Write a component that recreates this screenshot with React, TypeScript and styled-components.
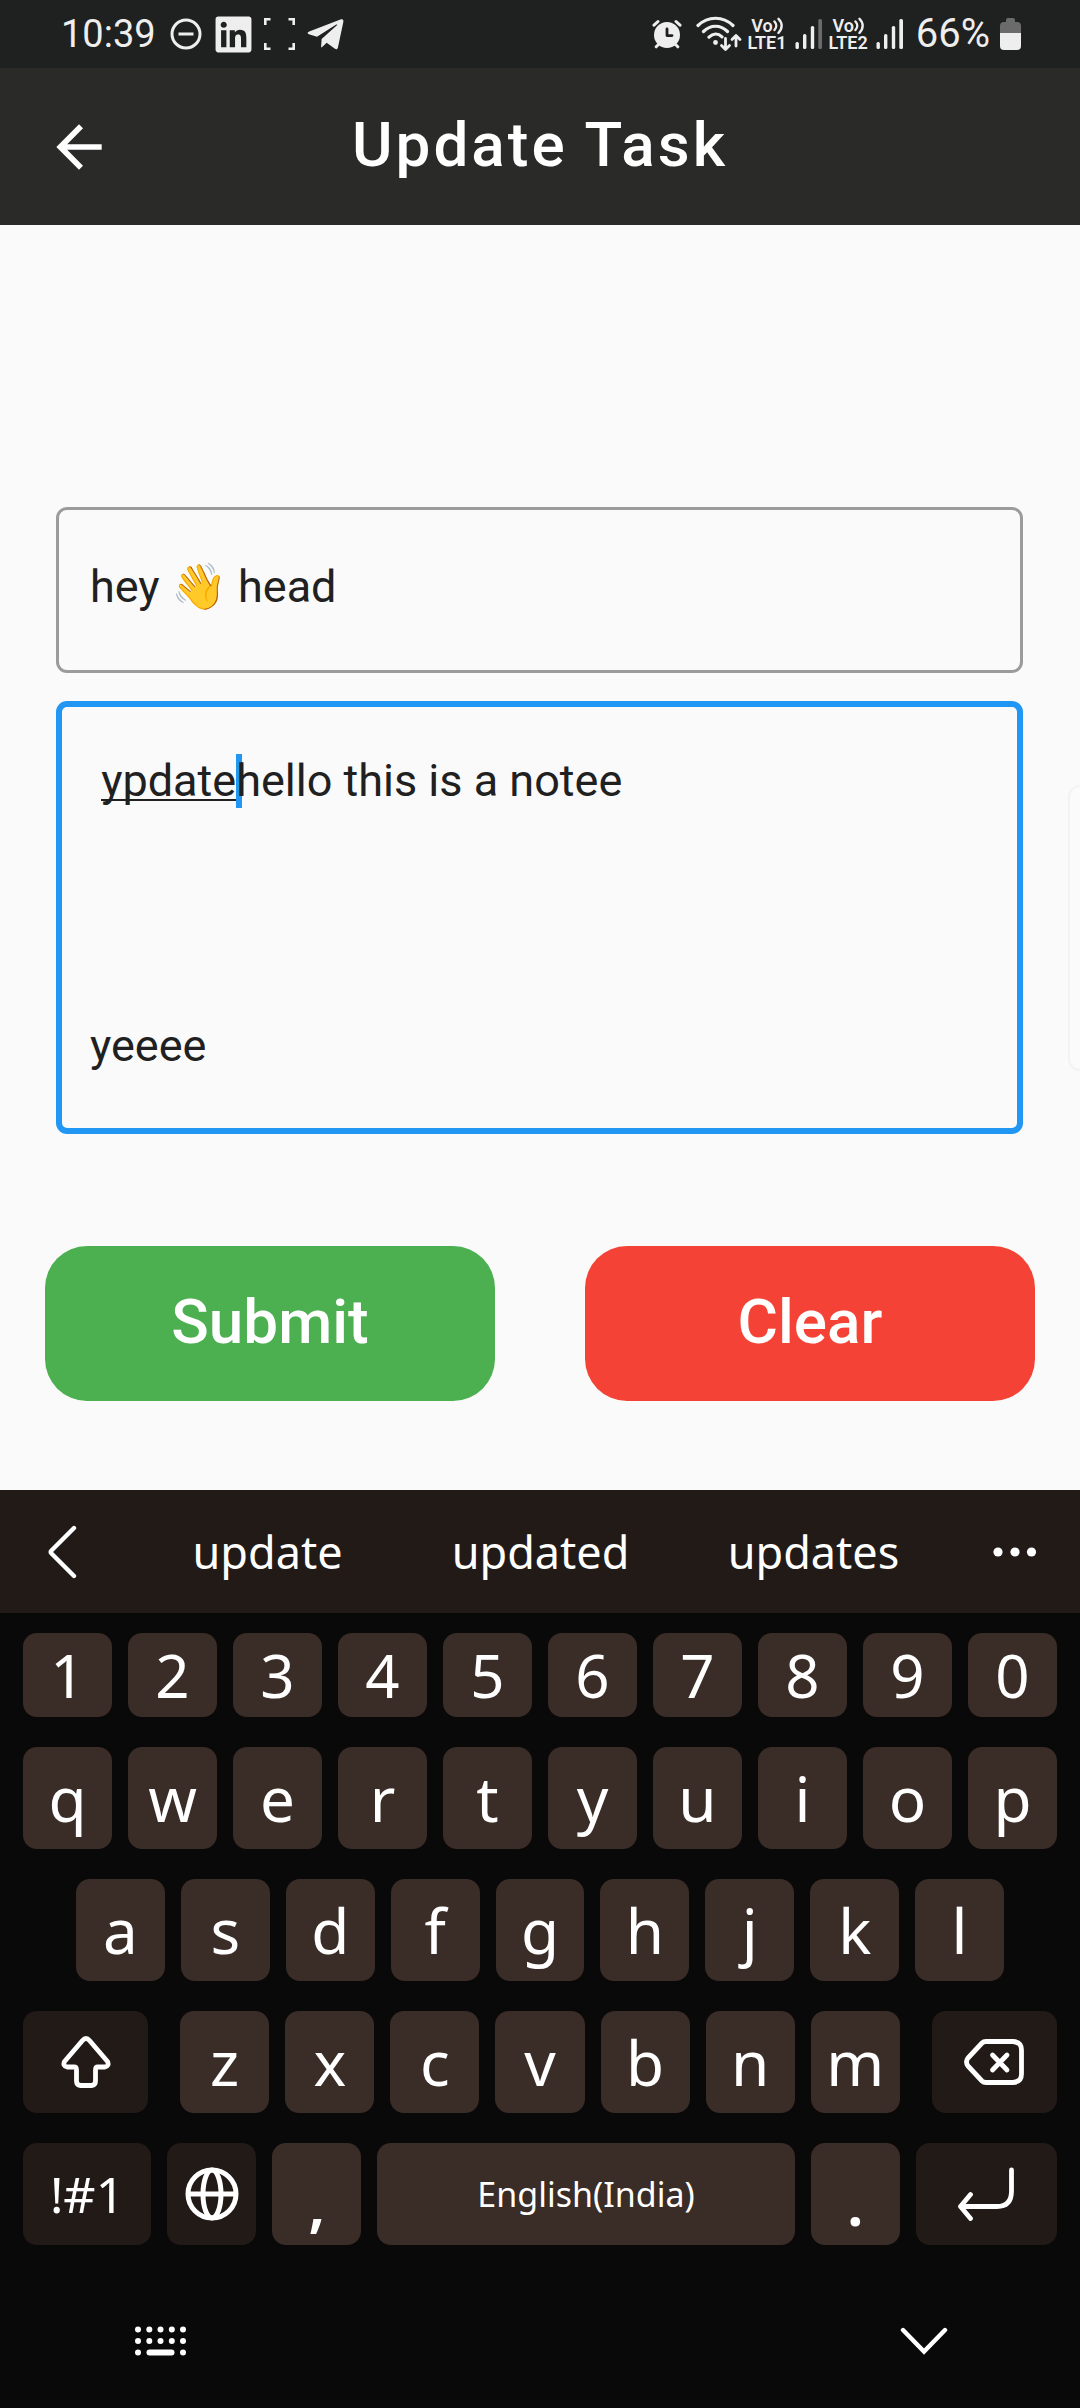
import React, { useLayoutEffect, useState } from 'react';
import styled, { createGlobalStyle, css } from 'styled-components';
import { FaLinkedin, FaTelegramPlane } from 'react-icons/fa';
import { MdArrowBack } from 'react-icons/md';

const GlobalStyle = createGlobalStyle`
  *, *::before, *::after { box-sizing: border-box; }
  body { margin: 0; background: #fafafa; }
  button, input, textarea { font-family: inherit; }
`;

const appFont = "Roboto, 'Noto Sans', sans-serif";
const keyFont = "'Noto Sans', Roboto, sans-serif";
const fieldText = '45px';
const headingText = '62px';

const Screen = styled.div`
  position: relative;
  display: flex;
  flex-direction: column;
  min-height: 100vh;
  overflow: hidden;
  background: #fafafa;
  font-family: ${appFont};
`;

/* ---------- status bar ---------- */

const StatusBar = styled.div`
  display: flex;
  justify-content: space-between;
  align-items: center;
  height: 68px;
  padding: 0 59px 0 61px;
  background: #1f2020;
  color: #eeeeee;
`;

const StatusGroup = styled.div<{ $gap: number }>`
  display: flex;
  align-items: center;
  gap: ${(p) => p.$gap}px;

  svg {
    display: block;
    flex: none;
  }
`;

const StatusText = styled.span`
  font-size: 38px;
  line-height: 44px;
`;

const BatteryText = styled(StatusText)`
  padding: 0 5px 0 6px;
  font-size: 40px;
`;

const Lte = styled.span`
  display: flex;
  flex-direction: column;
  align-items: center;
  font-size: 18px;
  font-weight: 600;
  line-height: 17px;
`;

const LteTop = styled.span`
  display: flex;
  align-items: center;
`;

/* ---------- app bar ---------- */

const AppBar = styled.header`
  display: grid;
  grid-template-columns: 1fr auto 1fr;
  align-items: center;
  height: 157px;
  padding: 0 45px;
  background: #2a2b29;
  color: #ffffff;
`;

const IconButton = styled.button`
  display: flex;
  align-items: center;
  justify-content: center;
  justify-self: start;
  padding: 0;
  border: 0;
  background: none;
  color: inherit;
`;

const Title = styled.h1`
  margin: 0;
  padding-bottom: 4px;
  font-size: ${headingText};
  font-weight: 500;
  line-height: 72px;
  letter-spacing: 3px;
`;

/* ---------- form ---------- */

const Form = styled.form`
  display: flex;
  flex: 1;
  flex-direction: column;
  padding: 282px 0 89px;
`;

const Fields = styled.div`
  display: flex;
  flex-direction: column;
  gap: 28px;
  padding: 0 57px 0 56px;
`;

const fieldBase = css`
  display: block;
  width: 100%;
  margin: 0;
  border-style: solid;
  border-radius: 11px;
  outline: none;
  background: transparent;
  color: #202020;
  font-size: ${fieldText};
  line-height: 53px;
`;

const TitleInput = styled.input`
  ${fieldBase}
  height: 166px;
  padding: 0 31px 8px;
  border-width: 3px;
  border-color: #9b9b9b;
`;

const NoteBox = styled.div`
  position: relative;
`;

const NoteInput = styled.textarea`
  ${fieldBase}
  position: relative;
  padding: 47px 28px 56px;
  border-width: 6px;
  border-color: #2196f3;
  resize: none;
  overflow: hidden;
`;

const Caret = styled.span`
  position: absolute;
  top: 53px;
  width: 6px;
  height: 54px;
  background: #2196f3;
`;

const ComposingLine = styled.span`
  position: absolute;
  top: 98px;
  height: 2px;
  background: #202020;
`;

const Actions = styled.div`
  display: grid;
  grid-template-columns: 1fr 1fr;
  gap: 90px;
  margin-top: 112px;
  padding: 0 45px;
`;

const ActionButton = styled.button<{ $color: string }>`
  height: 155px;
  padding: 0 0 3px;
  border: 0;
  border-radius: 42px;
  background: ${(p) => p.$color};
  color: #ffffff;
  font-size: ${headingText};
  font-weight: 500;
  line-height: 72px;
`;

const EdgeHandle = styled.div`
  position: absolute;
  top: 785px;
  right: 0;
  width: 12px;
  height: 286px;
  border: 2px solid #f3f3f3;
  border-right: 0;
  border-radius: 16px 0 0 16px;
  background: #fbfbfb;
`;

/* ---------- keyboard ---------- */

const Keyboard = styled.section`
  background: #090909;
  color: #ffffff;
  font-family: ${keyFont};

  svg {
    display: block;
  }
`;

const Suggestions = styled.div`
  display: grid;
  grid-template-columns: 131px 1fr 1fr 1fr 130px;
  align-items: center;
  height: 123px;
  background: #221a17;
`;

const Suggestion = styled.button`
  display: flex;
  align-items: center;
  justify-content: center;
  height: 100%;
  padding: 0;
  border: 0;
  background: none;
  color: inherit;
  font-size: 45px;
  line-height: 60px;
`;

const Rows = styled.div`
  display: flex;
  flex-direction: column;
  gap: 30px;
  padding: 20px 23px 0;
`;

const Row = styled.div<{ $inset?: boolean }>`
  display: flex;
  gap: 16px;
  padding: 0 ${(p) => (p.$inset ? 53 : 0)}px;
`;

const KeyGroup = styled.div`
  display: flex;
  flex: 719 1 0;
  gap: 16px;
  margin: 0 16px;
`;

type KeyProps = {
  $span?: number;
  $short?: boolean;
  $dark?: boolean;
  $size?: number;
  $low?: boolean;
};

const Key = styled.button<KeyProps>`
  display: flex;
  flex: ${(p) => p.$span ?? 89} 1 0;
  align-items: center;
  justify-content: center;
  min-width: 0;
  height: ${(p) => (p.$short ? 84 : 102)}px;
  padding: ${(p) => (p.$low ? 16 : 0)}px 0 0;
  border: 0;
  border-radius: 14px;
  background: ${(p) => (p.$dark ? '#221a17' : '#3a2c26')};
  color: inherit;
  font-size: ${(p) => p.$size ?? 62}px;
  font-weight: ${(p) => (p.$low ? 600 : 400)};
  line-height: 84px;
`;

const NavBar = styled.nav`
  display: flex;
  align-items: center;
  justify-content: space-between;
  height: 164px;
  padding: 28px 132px 0 134px;
`;

/* ---------- drawings ---------- */

const DndIcon = () => (
  <svg width="37" height="32" viewBox="-4 0 37 32" fill="none" stroke="currentColor" strokeWidth="3">
    <circle cx="16" cy="16" r="14" />
    <path d="M8.5 16h15" />
  </svg>
);

const FrameIcon = () => (
  <svg width="31" height="32" viewBox="0 0 31 32" fill="none" stroke="currentColor" strokeWidth="2.6">
    <path d="M1.3 7V1.3H6.5M24.5 1.3h5.2V7M29.7 25v5.7h-5.2M6.5 30.7H1.3V25" />
  </svg>
);

const AlarmIcon = () => (
  <svg width="39" height="30" viewBox="0 0 39 30" fill="none" stroke="currentColor" strokeLinecap="round">
    <circle cx="15" cy="16" r="13" fill="currentColor" stroke="none" />
    <path strokeWidth="3" d="M2 6.2 6 2.5M28 6.2 24 2.5M4.2 27.8 7 25M25.8 27.8 23 25" />
    <path stroke="#1f2020" strokeWidth="2.8" strokeLinejoin="round" d="M15 10v6.6h5" />
  </svg>
);

const WifiIcon = () => (
  <svg width="46" height="36" viewBox="0 0 46 36" fill="none" stroke="currentColor" strokeWidth="3.2" strokeLinecap="round">
    <path d="M2 9.5C12-.2 27-.2 37 9.5M7.5 15.5c7-7 17-7 24 0M13 21.2c4-4 9-4.2 13-.4" />
    <circle cx="19.5" cy="26.5" r="2.4" fill="currentColor" stroke="none" />
    <path strokeWidth="2.8" strokeLinejoin="round" d="M29.5 22.5V33M25.5 29.5l4 4 4-4M40 30V20M36 23.5l4-4 4 4" />
  </svg>
);

const VoiceWaves = () => (
  <svg width="10" height="17" viewBox="0 0 10 17" fill="none" stroke="currentColor" strokeWidth="2.4" strokeLinecap="round">
    <path d="M1.5 4.5c2.3 2.5 2.3 6 0 8.5M5.5 1.8c4.2 4 4.2 10 0 14" />
  </svg>
);

const SignalIcon = ({ weak }: { weak?: boolean }) => (
  <svg width="32" height="32" viewBox="-3 0 32 32" fill="currentColor">
    <rect x="0.5" y="24" width="3.4" height="7" rx="1.5" />
    <rect x="8" y="16" width="3.4" height="15" rx="1.5" />
    <rect x="15.8" y="8" width="3.4" height="23" rx="1.5" />
    <rect x="23.3" y="1" width="3.7" height="30" rx="1.5" fill={weak ? '#6b6b6b' : 'currentColor'} />
  </svg>
);

const BatteryIcon = () => (
  <svg width="21" height="32" viewBox="0 0 21 32">
    <path fill="#6b6b6b" d="M6 4V2q0-2 2-2h5q2 0 2 2v2h2q4 0 4 4v7H0V8q0-4 4-4z" />
    <path fill="currentColor" d="M0 15h21v13q0 4-4 4H4q-4 0-4-4z" />
  </svg>
);

const ChevronLeft = () => (
  <svg width="38" height="54" viewBox="0 0 38 54" fill="none" stroke="currentColor" strokeWidth="4.4" strokeLinecap="round" strokeLinejoin="round">
    <path d="M27 3 4.5 25.5q-1.5 1.5 0 3L27 51" />
  </svg>
);

const MoreDots = () => (
  <svg width="44" height="10" viewBox="0 0 44 10" fill="currentColor">
    <circle cx="5" cy="5" r="4.6" />
    <circle cx="22" cy="5" r="4.6" />
    <circle cx="38.5" cy="5" r="4.6" />
  </svg>
);

const ShiftIcon = () => (
  <svg width="50" height="52" viewBox="0 0 50 52" fill="none" stroke="currentColor" strokeWidth="4.8" strokeLinejoin="round">
    <path d="M21.5 4.5q3.5-4 7 0L46.5 25.5q2 4.5-2.5 5.5h-7q-2.5 0-2.5 3v11q0 4-4 4.5h-11q-4-.5-4-4.5V34q0-3-2.5-3H6q-4.5-1-2.5-5.5z" />
  </svg>
);

const BackspaceIcon = () => (
  <svg width="60" height="46" viewBox="0 0 60 46" fill="none" stroke="currentColor" strokeWidth="4.8" strokeLinecap="round" strokeLinejoin="round">
    <path d="M22 2.5h27q8.5.5 8.5 8.5v24q0 8-8.5 8.5H22q-2.5 0-4-1.5L4 27q-3-4 0-8L18 4q1.5-1.5 4-1.5z" />
    <path d="M28.5 16 43 31M43 16 28.5 31" />
  </svg>
);

const GlobeIcon = () => (
  <svg width="54" height="54" viewBox="0 0 54 54" fill="none" stroke="currentColor" strokeWidth="5">
    <circle cx="27" cy="27" r="24" />
    <ellipse cx="27" cy="27" rx="9" ry="24" />
    <path d="M3 27h48" />
  </svg>
);

const EnterIcon = () => (
  <svg width="58" height="54" viewBox="0 0 58 54" fill="none" stroke="currentColor" strokeWidth="4.8" strokeLinecap="round" strokeLinejoin="round">
    <path d="M54.5 3v21q0 15.5-14.5 15.5H3.5M13.5 27.5 3.5 39.5l10 12" />
  </svg>
);

const KeyboardIcon = () => (
  <svg width="53" height="30" viewBox="0 0 53 30" fill="currentColor">
    {[3.5, 15].map((y) =>
      [4, 15.3, 26.5, 37.8, 49].map((x) => <circle key={`${x}-${y}`} cx={x} cy={y} r="3" />),
    )}
    <circle cx="4" cy="26.5" r="3" />
    <circle cx="49" cy="26.5" r="3" />
    <rect x="12.5" y="23.5" width="28" height="6" rx="3" />
  </svg>
);

const ChevronDown = () => (
  <svg width="48" height="28" viewBox="0 0 48 28" fill="none" stroke="currentColor" strokeWidth="4.4" strokeLinecap="round">
    <path d="M3 3 24 24.5 45 3" />
  </svg>
);

/* ---------- screen ---------- */

const composing = 'ypdate';
const initialNote = ` ${composing}hello this is a notee\n\n\n\n\nyeeee`;
const noteInset = 34;

const widthOf = (text: string) => {
  const context = document.createElement('canvas').getContext('2d');
  if (!context) return 0;
  context.font = `${fieldText} Roboto`;
  return Math.round(context.measureText(text).width);
};

const LteLabel = ({ sim }: { sim: number }) => (
  <Lte>
    <LteTop>
      Vo
      <VoiceWaves />
    </LteTop>
    <span>LTE{sim}</span>
  </Lte>
);

const App = () => {
  const [mark, setMark] = useState({ start: 0, end: 0 });

  useLayoutEffect(() => {
    setMark({
      start: noteInset + widthOf(' '),
      end: noteInset + widthOf(` ${composing}`),
    });
  }, []);

  return (
    <Screen>
      <GlobalStyle />
      <StatusBar>
        <StatusGroup $gap={10}>
          <StatusText>10:39</StatusText>
          <DndIcon />
          <FaLinkedin size={41} />
          <FrameIcon />
          <FaTelegramPlane size={41} />
        </StatusGroup>
        <StatusGroup $gap={5}>
          <AlarmIcon />
          <WifiIcon />
          <LteLabel sim={1} />
          <SignalIcon weak />
          <LteLabel sim={2} />
          <SignalIcon />
          <BatteryText>66%</BatteryText>
          <BatteryIcon />
        </StatusGroup>
      </StatusBar>

      <AppBar>
        <IconButton type="button" aria-label="Back">
          <MdArrowBack size={68} />
        </IconButton>
        <Title>Update Task</Title>
      </AppBar>

      <Form onSubmit={(event) => event.preventDefault()}>
        <Fields>
          <TitleInput aria-label="Title" defaultValue="hey 👋 head" />
          <NoteBox>
            <Caret style={{ left: mark.end }} />
            <NoteInput aria-label="Note" rows={6} spellCheck={false} defaultValue={initialNote} />
            <ComposingLine style={{ left: mark.start, width: mark.end - mark.start }} />
          </NoteBox>
        </Fields>
        <Actions>
          <ActionButton type="submit" $color="#4caf50">Submit</ActionButton>
          <ActionButton type="reset" $color="#f44336">Clear</ActionButton>
        </Actions>
      </Form>

      <EdgeHandle />

      <Keyboard aria-label="Keyboard">
        <Suggestions>
          <Suggestion type="button" aria-label="Collapse suggestions"><ChevronLeft /></Suggestion>
          <Suggestion type="button">update</Suggestion>
          <Suggestion type="button">updated</Suggestion>
          <Suggestion type="button">updates</Suggestion>
          <Suggestion type="button" aria-label="More"><MoreDots /></Suggestion>
        </Suggestions>
        <Rows>
          <Row>
            {[...'1234567890'].map((k) => <Key key={k} type="button" $short $size={60}>{k}</Key>)}
          </Row>
          <Row>
            {[...'qwertyuiop'].map((k) => <Key key={k} type="button">{k}</Key>)}
          </Row>
          <Row $inset>
            {[...'asdfghjkl'].map((k) => <Key key={k} type="button">{k}</Key>)}
          </Row>
          <Row>
            <Key type="button" $span={125} $dark aria-label="Shift"><ShiftIcon /></Key>
            <KeyGroup>
              {[...'zxcvbnm'].map((k) => <Key key={k} type="button">{k}</Key>)}
            </KeyGroup>
            <Key type="button" $span={125} $dark aria-label="Backspace"><BackspaceIcon /></Key>
          </Row>
          <Row>
            <Key type="button" $span={128} $dark $size={50}>!#1</Key>
            <Key type="button" $dark aria-label="Language"><GlobeIcon /></Key>
            <Key type="button" $low>,</Key>
            <Key type="button" $span={417} $size={34}>English(India)</Key>
            <Key type="button" $low>.</Key>
            <Key type="button" $span={141} $dark aria-label="Enter"><EnterIcon /></Key>
          </Row>
        </Rows>
        <NavBar>
          <IconButton type="button" aria-label="Switch keyboard"><KeyboardIcon /></IconButton>
          <IconButton type="button" aria-label="Hide keyboard"><ChevronDown /></IconButton>
        </NavBar>
      </Keyboard>
    </Screen>
  );
};

export default App;
